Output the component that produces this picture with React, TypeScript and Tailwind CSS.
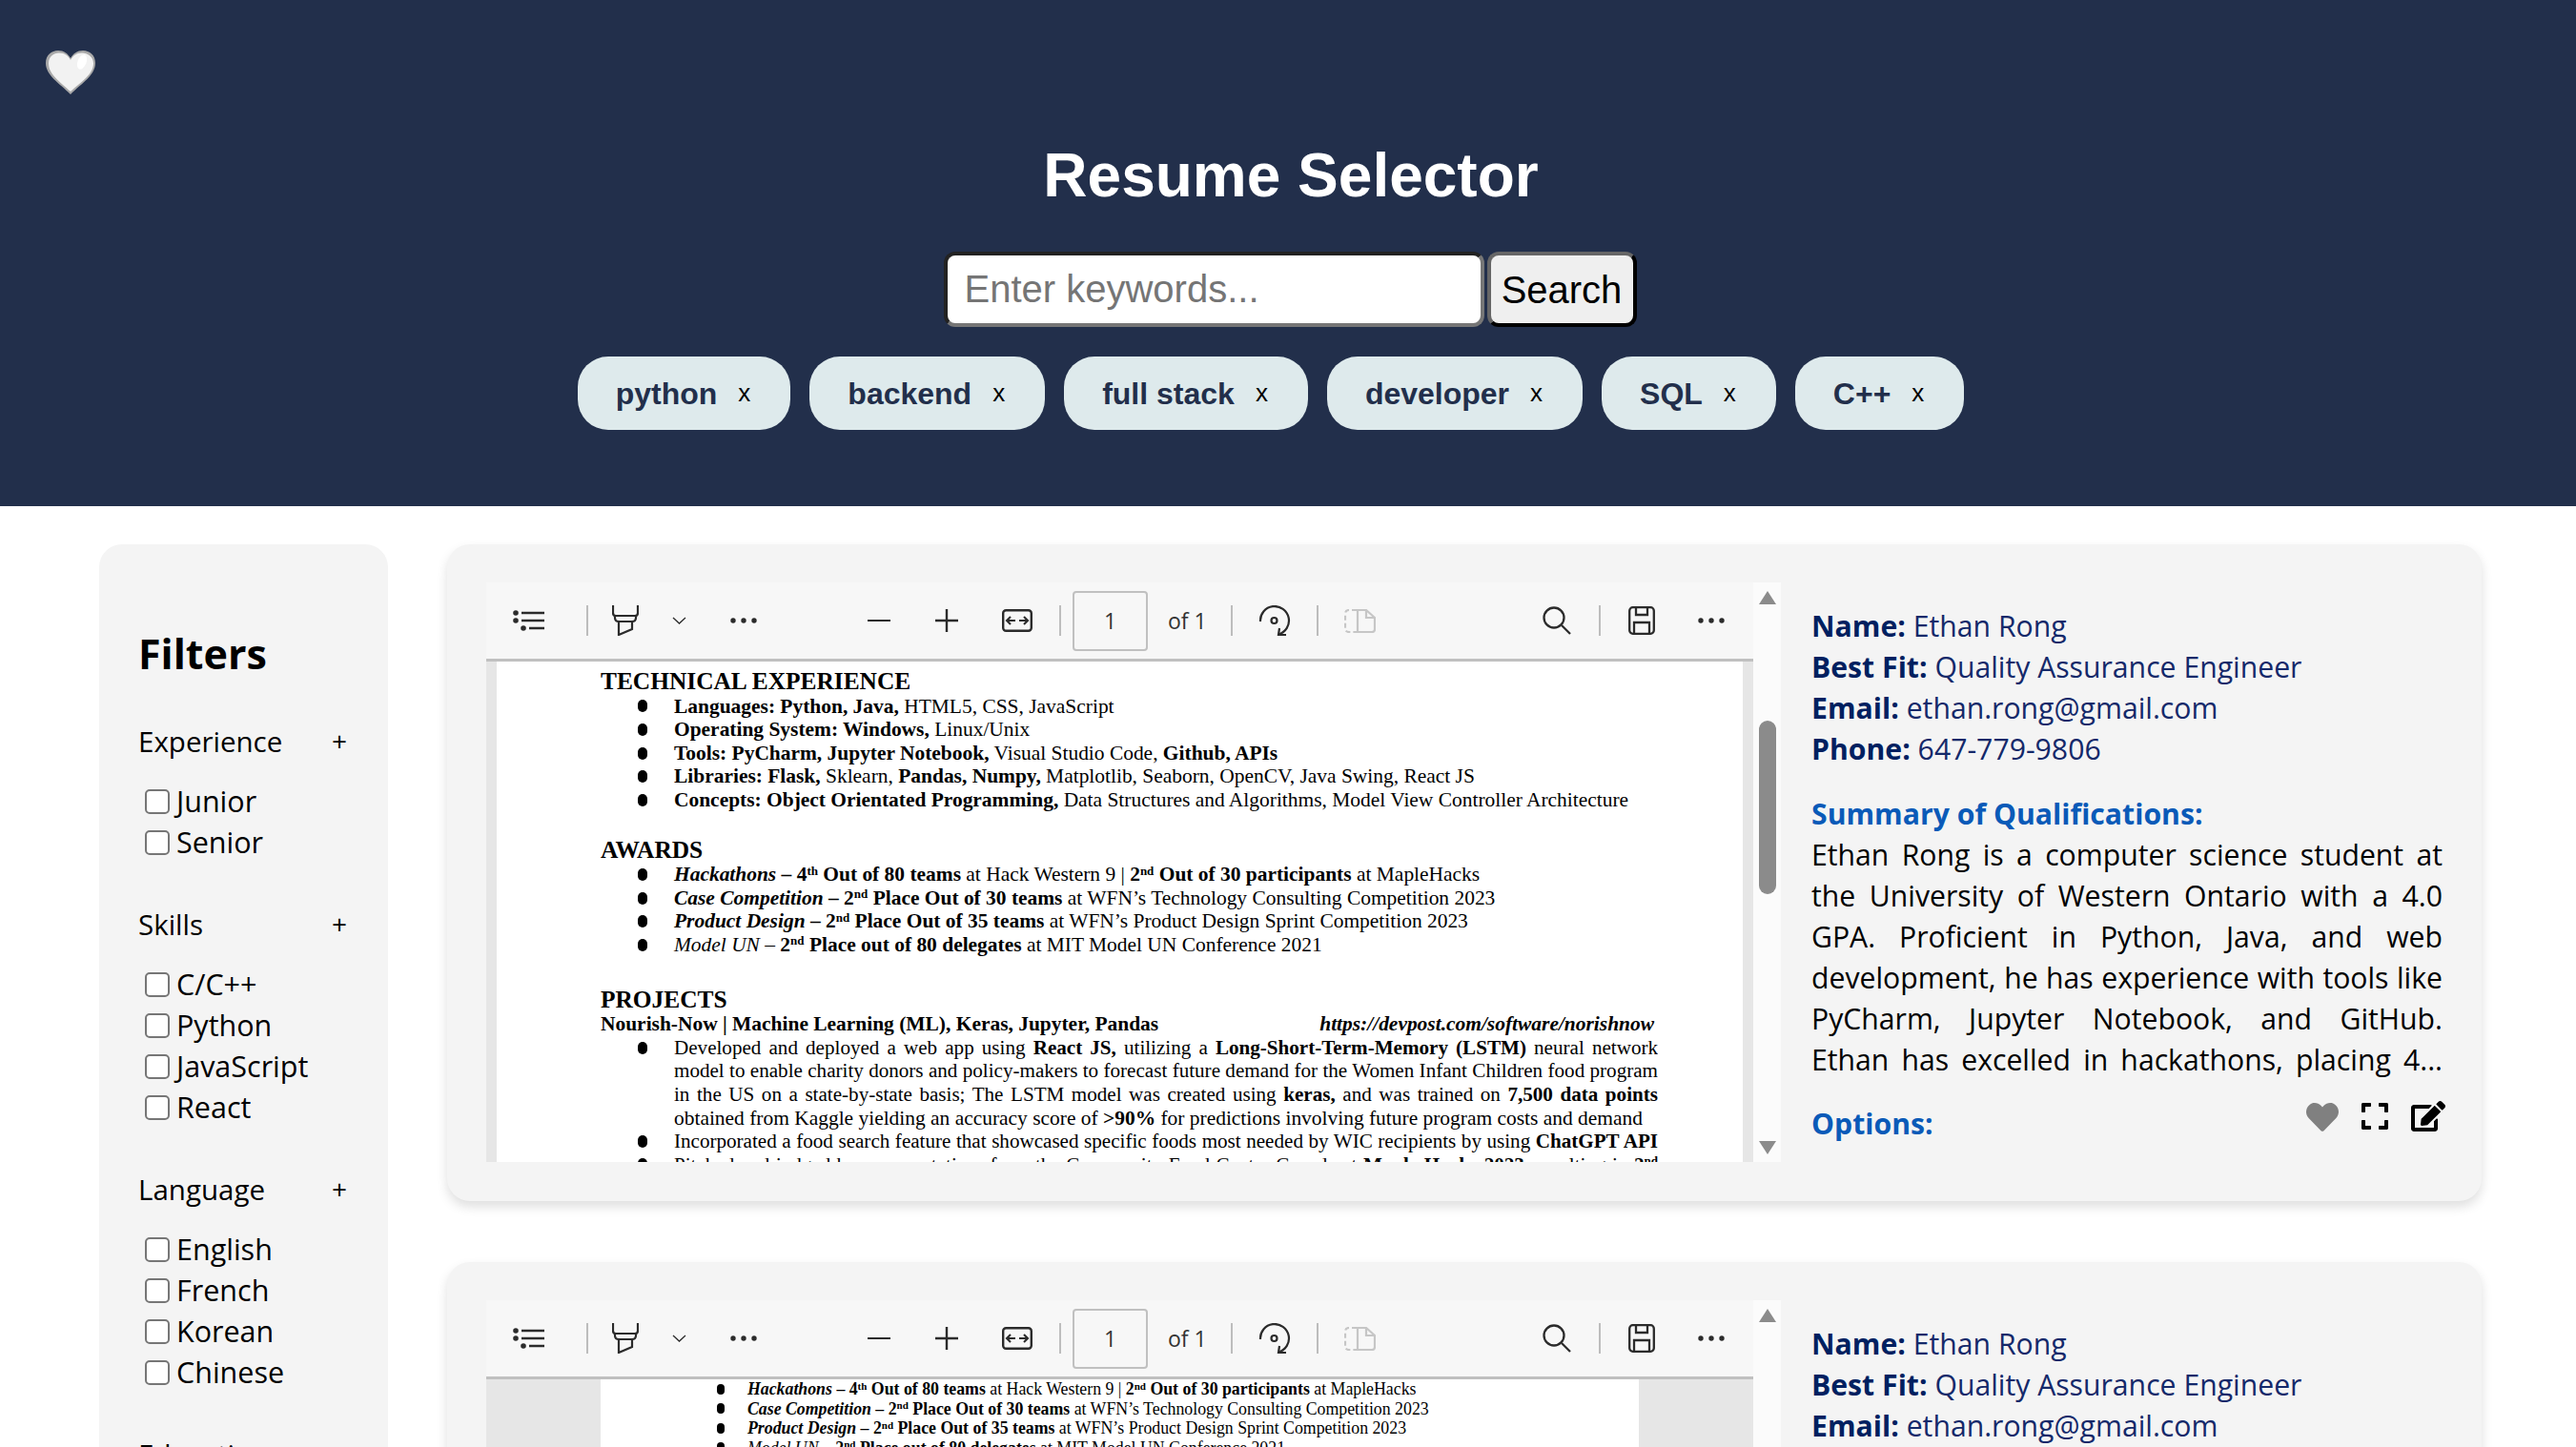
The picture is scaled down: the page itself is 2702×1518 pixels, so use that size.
import React from 'react';
import { FaHeart, FaExpand, FaEdit } from 'react-icons/fa';

const tags = ['python', 'backend', 'full stack', 'developer', 'SQL', 'C++'];

const filters = [
  { title: 'Experience', options: ['Junior', 'Senior'] },
  { title: 'Skills', options: ['C/C++', 'Python', 'JavaScript', 'React'] },
  { title: 'Language', options: ['English', 'French', 'Korean', 'Chinese'] },
  { title: 'Education', options: ['Bachelor', 'Master'] },
];

const summaryLines = [
  'Ethan Rong is a computer science student at',
  'the University of Western Ontario with a 4.0',
  'GPA. Proficient in Python, Java, and web',
  'development, he has experience with tools like',
  'PyCharm, Jupyter Notebook, and GitHub.',
  'Ethan has excelled in hackathons, placing 4...',
];

const Divider = ({ ml }: { ml: string }) => <div className={`w-[2px] h-[32px] bg-[#bdbdbd] shrink-0 ${ml}`} />;

const Dots = ({ ml }: { ml: string }) => (
  <svg width="28" height="8" viewBox="0 0 28 8" className={`shrink-0 ${ml}`}>
    <circle cx="3" cy="4" r="2.7" fill="#2b2b2b" />
    <circle cx="14" cy="4" r="2.7" fill="#2b2b2b" />
    <circle cx="25" cy="4" r="2.7" fill="#2b2b2b" />
  </svg>
);

const Toolbar = () => (
  <div className="h-[80px] bg-[#f7f7f7] flex items-center border-b-[3px] border-[#c0c0c0] box-content shrink-0">
    <svg width="34" height="24" viewBox="0 0 34 24" fill="none" stroke="#2b2b2b" strokeWidth="2.4" className="ml-[28px] shrink-0">
      <circle cx="3" cy="4" r="1.6" fill="#2b2b2b" />
      <circle cx="3" cy="12" r="1.6" fill="#2b2b2b" />
      <circle cx="11" cy="20" r="1.6" fill="#2b2b2b" />
      <path d="M9 4H33M9 12H33M17 20H33" />
    </svg>
    <Divider ml="ml-[43px]" />
    <svg width="28" height="32" viewBox="0 0 28 32" fill="none" stroke="#2b2b2b" strokeWidth="2.2" className="ml-[25px] shrink-0">
      <path d="M1 0V8Q1 11 4 11H24Q27 11 27 8V0" />
      <path d="M3 11V13Q3 17 7 17H21Q25 17 25 13V11" />
      <path d="M7 17V31L21 25V17" />
    </svg>
    <svg width="15" height="8" viewBox="0 0 15 8" fill="none" stroke="#2b2b2b" strokeWidth="1.3" className="ml-[35px] shrink-0">
      <path d="M1 1L7.5 7L14 1" />
    </svg>
    <Dots ml="ml-[46px]" />
    <div className="w-[24px] h-[2.5px] bg-[#2b2b2b] ml-[116px] shrink-0" />
    <svg width="24" height="24" viewBox="0 0 24 24" stroke="#2b2b2b" strokeWidth="2.4" className="ml-[47px] shrink-0">
      <path d="M0 12H24M12 0V24" />
    </svg>
    <svg width="32" height="24" viewBox="0 0 32 24" fill="none" stroke="#2b2b2b" strokeWidth="2.4" className="ml-[46px] shrink-0">
      <rect x="1.2" y="1.2" width="29.6" height="21.6" rx="3" />
      <path d="M14 12H5M9 8L5 12L9 16M18 12H27M23 8L27 12L23 16" strokeWidth="2.1" />
    </svg>
    <Divider ml="ml-[28px]" />
    <div className="w-[79px] h-[63px] ml-[12px] border-2 border-[#c0c0c0] rounded-[4px] flex items-center justify-center text-[23px] text-[#333] font-['Open_Sans',sans-serif] shrink-0">1</div>
    <div className="ml-[21px] w-[40px] text-[23px] whitespace-nowrap text-[#333] font-['Open_Sans',sans-serif] shrink-0">of 1</div>
    <Divider ml="ml-[26px]" />
    <svg width="34" height="33" viewBox="0 0 34 33" fill="none" stroke="#2b2b2b" strokeWidth="2.2" className="ml-[27px] shrink-0">
      <path d="M2 17A15 15 0 1 1 21 30.5" />
      <circle cx="16.5" cy="16" r="3" />
      <path d="M22 24L21 31H29" />
    </svg>
    <Divider ml="ml-[27px]" />
    <svg width="33" height="25" viewBox="0 0 33 25" fill="none" stroke="#c6c6c6" strokeWidth="2.2" className="ml-[27px] shrink-0">
      <path d="M13 1H5Q1 1 1 5V20Q1 24 5 24H13" strokeDasharray="5 3" />
      <path d="M14 1H23L32 9V21Q32 24 29 24H14Z" />
      <path d="M23 1V9H32" />
    </svg>
    <svg width="30" height="30" viewBox="0 0 30 30" fill="none" stroke="#2b2b2b" strokeWidth="2.3" className="ml-[175px] shrink-0">
      <circle cx="12" cy="12" r="10.5" />
      <path d="M20 20L29 29" />
    </svg>
    <Divider ml="ml-[29px]" />
    <svg width="28" height="30" viewBox="0 0 28 30" fill="none" stroke="#2b2b2b" strokeWidth="2.3" className="ml-[29px] shrink-0">
      <rect x="1.2" y="1.2" width="25.6" height="27.6" rx="3.5" />
      <path d="M8 1.2V9H20V1.2M6 28.8V17H22V28.8" />
    </svg>
    <Dots ml="ml-[45px]" />
  </div>
);

const Bullet = ({ children }: { children: React.ReactNode }) => (
  <div className="flex items-center h-[24.6px]">
    <div className="w-[10px] h-[13px] rounded-full bg-black shrink-0" />
    <div className="flex-1 min-w-0 ml-[28px] whitespace-nowrap">{children}</div>
  </div>
);

const JustLine = ({ children }: { children: React.ReactNode }) => (
  <div className="h-[24.6px] overflow-hidden text-justify [text-align-last:justify] whitespace-normal text-[21.1px]">{children}</div>
);

const Scrollbar = ({ thumb }: { thumb: boolean }) => (
  <div className="w-[29px] bg-[#fbfbfb] flex flex-col items-center shrink-0 relative">
    <svg width="18" height="14" viewBox="0 0 18 14" className="mt-[9px] shrink-0">
      <path d="M9 0L18 14H0Z" fill="#8b8b8b" />
    </svg>
    {thumb && <div className="w-[18px] h-[182px] rounded-full bg-[#8b8b8b] mt-[122px]" />}
    <svg width="18" height="14" viewBox="0 0 18 14" className="mt-auto mb-[8px] shrink-0">
      <path d="M9 14L18 0H0Z" fill="#8b8b8b" />
    </svg>
  </div>
);

const FullPage = () => (
  <div className="flex-1 bg-[#e6e6e6] px-[11px] overflow-hidden">
    <div className="h-full bg-white pl-[109px] pr-[89px] pt-[8px] font-['Liberation_Serif',serif] text-[21.45px] leading-[24.6px] text-black [&_sup]:text-[13px]">
      <div className="font-bold text-[25.4px] whitespace-nowrap">TECHNICAL EXPERIENCE</div>
      <div className="mt-[2px] ml-[39px]">
        <Bullet><b>Languages: Python, Java,</b> HTML5, CSS, JavaScript</Bullet>
        <Bullet><b>Operating System: Windows,</b> Linux/Unix</Bullet>
        <Bullet><b>Tools: PyCharm, Jupyter Notebook,</b> Visual Studio Code, <b>Github, APIs</b></Bullet>
        <Bullet><b>Libraries: Flask,</b> Sklearn, <b>Pandas, Numpy,</b> Matplotlib, Seaborn, OpenCV, Java Swing, React JS</Bullet>
        <Bullet><b>Concepts: Object Orientated Programming,</b> Data Structures and Algorithms, Model View Controller Architecture</Bullet>
      </div>
      <div className="font-bold text-[25.4px] mt-[27px] whitespace-nowrap">AWARDS</div>
      <div className="mt-[2px] ml-[39px]">
        <Bullet><b><i>Hackathons</i> – 4<sup>th</sup> Out of 80 teams</b> at Hack Western 9 | <b>2<sup>nd</sup> Out of 30 participants</b> at MapleHacks</Bullet>
        <Bullet><b><i>Case Competition</i> – 2<sup>nd</sup> Place Out of 30 teams</b> at WFN’s Technology Consulting Competition 2023</Bullet>
        <Bullet><b><i>Product Design</i> – 2<sup>nd</sup> Place Out of 35 teams</b> at WFN’s Product Design Sprint Competition 2023</Bullet>
        <Bullet><i>Model UN</i> – <b>2<sup>nd</sup> Place out of 80 delegates</b> at MIT Model UN Conference 2021</Bullet>
      </div>
      <div className="font-bold text-[25.4px] mt-[32px] whitespace-nowrap">PROJECTS</div>
      <div className="mt-[2px] flex justify-between whitespace-nowrap">
        <b>Nourish-Now | Machine Learning (ML), Keras, Jupyter, Pandas</b>
        <b className="pr-[4px]"><i>https://devpost.com/software/norishnow</i></b>
      </div>
      <div className="ml-[39px]">
        <Bullet><JustLine>Developed and deployed a web app using <b>React JS,</b> utilizing a <b>Long-Short-Term-Memory (LSTM)</b> neural network</JustLine></Bullet>
        <div className="pl-[38px]">
          <JustLine>model to enable charity donors and policy-makers to forecast future demand for the Women Infant Children food program</JustLine>
          <JustLine>in the US on a state-by-state basis; The LSTM model was created using <b>keras,</b> and was trained on <b>7,500 data points</b></JustLine>
          <div className="whitespace-nowrap h-[24.6px]">obtained from Kaggle yielding an accuracy score of <b>&gt;90%</b> for predictions involving future program costs and demand</div>
        </div>
        <Bullet><JustLine>Incorporated a food search feature that showcased specific foods most needed by WIC recipients by using <b>ChatGPT API</b></JustLine></Bullet>
        <Bullet><JustLine>Pitched and judged by representatives from the Community Food Centre Canada at <b>Maple Hacks 2023,</b> resulting in <b>2<sup>nd</sup></b></JustLine></Bullet>
      </div>
    </div>
  </div>
);

const ZoomedOutPage = () => (
  <div className="flex-1 bg-[#e6e6e6] px-[120px] overflow-hidden">
    <div className="h-full bg-white pl-[122px] font-['Liberation_Serif',serif] text-[17.8px] leading-[20.5px] text-black [&_sup]:text-[11px]">
      <div className="[&>div]:h-[20.5px] [&>div>div:first-child]:w-[8px] [&>div>div:first-child]:h-[11px] [&>div>div:last-child]:ml-[24px]">
        <Bullet><b><i>Hackathons</i> – 4<sup>th</sup> Out of 80 teams</b> at Hack Western 9 | <b>2<sup>nd</sup> Out of 30 participants</b> at MapleHacks</Bullet>
        <Bullet><b><i>Case Competition</i> – 2<sup>nd</sup> Place Out of 30 teams</b> at WFN’s Technology Consulting Competition 2023</Bullet>
        <Bullet><b><i>Product Design</i> – 2<sup>nd</sup> Place Out of 35 teams</b> at WFN’s Product Design Sprint Competition 2023</Bullet>
        <Bullet><i>Model UN</i> – <b>2<sup>nd</sup> Place out of 80 delegates</b> at MIT Model UN Conference 2021</Bullet>
      </div>
    </div>
  </div>
);

const Info = () => (
  <div className="flex-1 ml-[32px] mt-[24px] text-[30.2px] leading-[43px] font-['Open_Sans',sans-serif]">
    <div className="text-[#14296a]"><b className="font-bold text-[#002060]">Name:</b> Ethan Rong</div>
    <div className="text-[#14296a]"><b className="font-bold text-[#002060]">Best Fit:</b> Quality Assurance Engineer</div>
    <div className="text-[#14296a]"><b className="font-bold text-[#002060]">Email:</b> ethan.rong@gmail.com</div>
    <div className="text-[#14296a]"><b className="font-bold text-[#002060]">Phone:</b> 647-779-9806</div>
    <div className="mt-[25px] font-bold text-[#0a5ab8]">Summary of Qualifications:</div>
    {summaryLines.map((line) => (
      <div key={line} className="h-[43px] overflow-hidden text-justify [text-align-last:justify] text-black">{line}</div>
    ))}
    <div className="mt-[24px] flex justify-between">
      <div className="font-bold text-[#0a5ab8]">Options:</div>
      <div className="flex items-start gap-[22px] h-[30px] -mt-[2px] -mr-[3px]">
        <FaHeart className="w-[34px] h-[34px] text-[#808080]" />
        <FaExpand className="w-[32px] h-[32px] text-black" />
        <FaEdit className="w-[36px] h-[32px] text-black" />
      </div>
    </div>
  </div>
);

const ResumeCard = ({ children, thumb }: { children: React.ReactNode; thumb: boolean }) => (
  <div className="bg-[#f4f4f4] rounded-[24px] h-[689px] px-[41px] pt-[40px] flex shadow-[0_6px_12px_rgba(0,0,0,0.13)]">
    <div className="w-[1358px] h-[608px] flex overflow-hidden shrink-0">
      <div className="flex-1 flex flex-col min-w-0">
        <Toolbar />
        <div className="flex-1 flex min-h-0">{children}</div>
      </div>
      <Scrollbar thumb={thumb} />
    </div>
    <Info />
  </div>
);

const App: React.FC = () => {
  return (
    <div className="h-screen overflow-hidden bg-white font-['Liberation_Sans',sans-serif]">
      <header className="relative h-[531px] bg-[#222f4b] flex flex-col items-center pt-[147px]">
        <svg width="52" height="46" viewBox="0 0 52 46" className="absolute left-[48px] top-[53px]">
          <path d="M26 46C14 34 0 26 0 13C0 5 6 0 13 0C19 0 23 3 26 8C29 3 33 0 39 0C46 0 52 5 52 13C52 26 38 34 26 46Z" fill="#a9a9a9" />
          <path d="M26 43C15 33 3 25 3 13.5C3 6.5 8 2.5 14 2.5C20 2.5 24 6 26 10C28 6 32 2.5 38 2.5C44 2.5 50 6.5 50 13.5C50 25 37 33 26 43Z" fill="#f2f2f2" />
          <ellipse cx="38" cy="12" rx="4.5" ry="8" transform="rotate(22 38 12)" fill="#ffffff" />
        </svg>
        <h1 className="pl-[6px] text-[64px] leading-[74px] font-bold text-white">Resume Selector</h1>
        <div className="pl-[4px] mt-[43px] flex gap-[3px]">
          <input
            placeholder="Enter keywords..."
            className="w-[567px] h-[79px] bg-white border-4 border-t-[#222] border-l-[#222] border-r-[#767676] border-b-[#767676] rounded-[12px] pl-[18px] pr-[15px] text-[40px] placeholder:text-[#757575] outline-none"
          />
          <button className="w-[157px] h-[79px] bg-[#efefef] border-4 border-t-[#666] border-l-[#666] border-r-black border-b-black rounded-[12px] text-[40px] text-black">
            Search
          </button>
        </div>
        <div className="pr-[36px] mt-[31px] flex gap-[20px]">
          {tags.map((t) => (
            <div key={t} className="h-[77px] pl-[40px] pr-[42px] rounded-[32px] bg-[#deeaec] flex items-center whitespace-nowrap">
              <span className="text-[32px] font-bold text-[#222f4b]">{t}</span>
              <span className="ml-[22px] text-[26px] text-black">x</span>
            </div>
          ))}
        </div>
      </header>

      <main className="flex items-start pl-[104px] pt-[40px]">
        <aside className="w-[303px] h-[1300px] shrink-0 bg-[#f4f4f4] rounded-[24px] pl-[41px] pr-[42px] pt-[82px] font-['Open_Sans',sans-serif] text-black">
          <h2 className="text-[43px] leading-[66px] font-bold">Filters</h2>
          <div className="mt-[37px] flex flex-col gap-[43px]">
            {filters.map((g) => (
              <div key={g.title}>
                <div className="flex justify-between items-center text-[29.5px] leading-[43px]">
                  <span>{g.title}</span>
                  <span className="text-[28px] pr-[1px]">+</span>
                </div>
                <div className="mt-[20px]">
                  {g.options.map((o) => (
                    <label key={o} className="flex items-center h-[43px] pl-[7px] text-[30.5px]">
                      <input type="checkbox" className="appearance-none w-[26px] h-[26px] bg-white border-[2.5px] border-[#767676] rounded-[5px] shrink-0" />
                      <span className="ml-[7px]">{o}</span>
                    </label>
                  ))}
                </div>
              </div>
            ))}
          </div>
        </aside>

        <div className="w-[2134px] ml-[62px] flex flex-col gap-[64px]">
          <ResumeCard thumb={true}>
            <FullPage />
          </ResumeCard>
          <ResumeCard thumb={false}>
            <ZoomedOutPage />
          </ResumeCard>
        </div>
      </main>
    </div>
  );
};

export default App;
